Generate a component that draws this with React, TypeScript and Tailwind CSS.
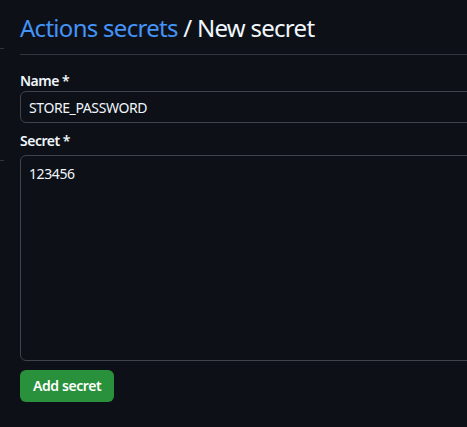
export default function App() {
  return (
    <div className="h-[427px] w-[467px] overflow-hidden bg-[#0d1117] font-['Noto_Sans',sans-serif] tracking-[-0.025em] text-[#f0f6fc]">
      <div className="flex w-[700px] gap-4">
        {/* edge of the settings sidebar */}
        <div className="w-1 shrink-0">
          <div className="h-[49px] border-b border-[#30363d]" />
          <div className="h-[112px] border-b border-[#30363d]" />
        </div>

        <main className="flex-1 pt-[10px]">
          <div className="mb-4 border-b border-[#30363d] pb-2">
            <h1 className="text-[24px] font-normal leading-[36px] tracking-[-0.03em]">
              <span className="text-[#4493f8]">Actions secrets</span> / New secret
            </h1>
          </div>

          <form>
            <label className="block h-5 text-sm font-semibold leading-5 tracking-[-0.035em]">Name *</label>
            <input
              className="block h-8 w-full rounded-md border border-[#3d444d] bg-[#0d1117] px-2 text-sm text-[#f0f6fc] outline-none"
              defaultValue="STORE_PASSWORD"
              type="text"
            />

            <label className="mt-2 mb-1 block h-5 text-sm font-semibold leading-5 tracking-[-0.035em]">Secret *</label>
            <textarea
              className="block h-[206px] w-full resize-none rounded-md border border-[#3d444d] bg-[#0d1117] px-2 py-2 text-sm leading-5 text-[#f0f6fc] outline-none"
              defaultValue="123456"
            />

            <button
              className="mt-[9px] h-8 rounded-md bg-[#29903b] px-[13px] text-sm font-semibold tracking-[-0.03em] text-white"
              type="button"
            >
              Add secret
            </button>
          </form>
        </main>
      </div>
    </div>
  );
}
